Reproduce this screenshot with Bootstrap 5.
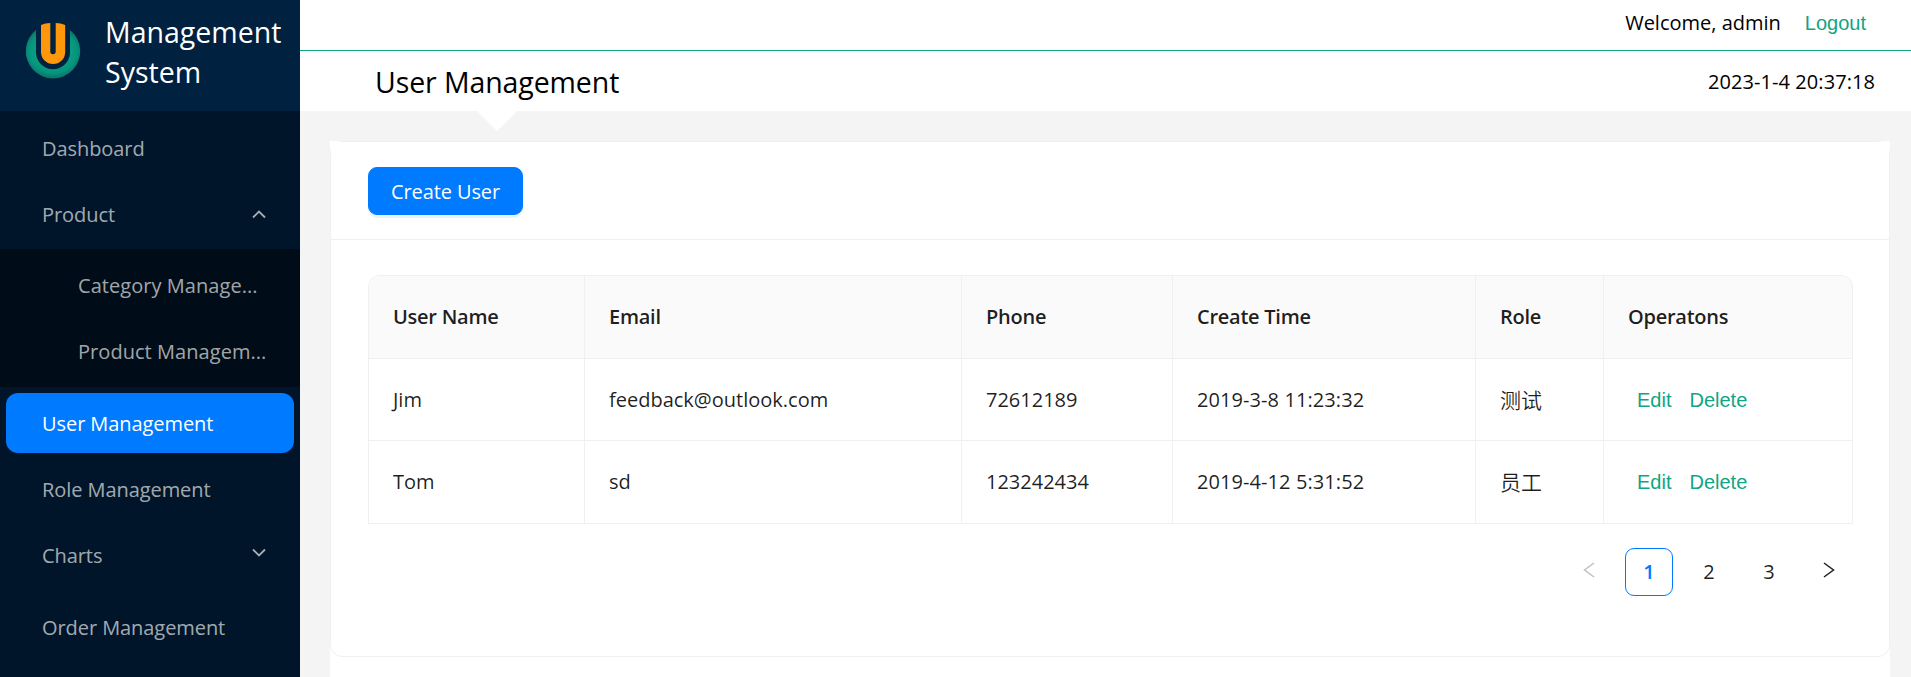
<!DOCTYPE html>
<html lang="en">
<head>
<meta charset="utf-8">
<meta name="viewport" content="width=device-width, initial-scale=1">
<title>Management System</title>
<link href="https://cdn.jsdelivr.net/npm/bootstrap@5.3.0/dist/css/bootstrap.min.css" rel="stylesheet">
<style>
:root { --app-blue: #007aff; --app-green: #10a585; --app-line: #f0f0f0; }
body { font-family: "Open Sans", "Noto Sans CJK SC", sans-serif; font-size: 20px; line-height: 30px; color: #000; height: 677px; background: #f4f4f4; }
.app-side { width: 300px; background: #001529; }
.app-brand { height: 111px; background: #002140; padding: 6px 0 0 26px; gap: 24px; }
.app-brand h1 { font-size: 28.5px; line-height: 40px; font-weight: 400; margin: 6px 0 0; }
.app-logo { margin-top: 16px; }
.app-menu { padding-top: 7px; letter-spacing: -.07px; }
.app-menu .nav-link { height: 60px; margin: 0 6px 6px; padding: 2px 28px 0 36px; border-radius: 12px; color: rgba(255,255,255,.65); }
.app-menu .nav-link.active { background: var(--app-blue); color: #fff; }
.app-sub { background: #000c17; padding: 6px 0; margin: -1px 0 6px; letter-spacing: .05px; }
.app-sub .nav-link { padding-left: 72px; padding-right: 20px; }
.app-sub .nav-link:last-child { margin-bottom: 0; }
.app-menu .after-sub { margin-top: 6px; }
.app-menu .chev-up { margin-top: -2px; }
.app-menu .chev-down { margin-top: -7px; }
.app-top { height: 51px; border-bottom: 1px solid var(--app-green); padding: 0 45px 5px 0; gap: 24px; }
.app-title { height: 60px; padding: 2px 36px 0 75px; letter-spacing: .07px; }
.app-title h2 { font-size: 28.5px; line-height: 40px; font-weight: 400; margin: 0; letter-spacing: -.1px; }
.app-title::after { content: ""; position: absolute; top: 100%; left: 177px; border: 20px solid transparent; border-top-color: #fff; border-bottom: 0; }
.link-btn { font-family: "Liberation Sans", Arial, sans-serif; font-size: 20px; line-height: 30px; color: var(--app-green); background: none; border: 0; padding: 0; }
.app-content { margin: 30px 21px 0 30px; }
.app-card { --bs-card-border-color: var(--app-line); --bs-card-border-radius: 12px; height: 516px; }
.app-card > .card-header { height: 98px; background: #fff; padding: 25px 37px; border-bottom: 1px solid var(--app-line); }
.app-card > .card-body { padding: 35px 36px 0 37px; }
.btn-create { --bs-btn-bg: var(--app-blue); --bs-btn-border-color: var(--app-blue); --bs-btn-color: #fff; width: 155px; height: 48px; border-radius: 9px; font-size: 20px; line-height: 30px; padding: 1px 0 0; letter-spacing: -.1px; box-shadow: 0 3px 0 rgba(5,145,255,.1); }
.app-table { width: 1485px; table-layout: fixed; border-collapse: separate; border-spacing: 0; border-left: 1px solid var(--app-line); border-top: 1px solid var(--app-line); border-radius: 12px 12px 0 0; margin-bottom: 24px; }
.app-table th, .app-table td { height: 83px; padding: 0 24px; vertical-align: middle; border-right: 1px solid var(--app-line); border-bottom: 1px solid var(--app-line); color: rgba(0,0,0,.88); }
.app-table tbody tr:first-child td { height: 82px; }
.app-table th { background: #fafafa; font-weight: 600; letter-spacing: -.25px; }
.app-table th:first-child { border-top-left-radius: 11px; }
.app-table th:last-child { border-top-right-radius: 11px; }
.app-table .role-name { font-size: 21px; font-weight: 350; }
.app-table .stamp { letter-spacing: .08px; }
.app-ops { gap: 18px; padding-left: 9px; }
.app-pages { gap: 12px; }
.app-pages .page-item { margin: 0; }
.app-pages .page-item .page-link { width: 48px; height: 48px; margin: 0; border: 1px solid transparent; border-radius: 9px; font-size: 20px; line-height: 30px; color: rgba(0,0,0,.88); background: none; padding: 0; }
.app-pages .active .page-link { border-color: var(--app-blue); color: var(--app-blue); font-weight: 600; background: #fff; }
.app-pages .disabled .page-link { color: rgba(0,0,0,.25); }
.app-pages svg { margin-top: -4px; }
</style>
</head>
<body class="d-flex overflow-hidden">
<aside class="app-side flex-shrink-0">
  <div class="app-brand d-flex text-white">
    <svg class="app-logo flex-shrink-0" width="55" height="58" viewBox="0 0 55 58">
      <defs><radialGradient id="ring" cx=".5" cy=".45" r=".55"><stop offset=".5" stop-color="#0b9f84"/><stop offset=".8" stop-color="#06957c"/><stop offset="1" stop-color="#0b7069"/></radialGradient></defs>
      <path d="M10 8A27.200 27.200 0 1 0 44 8V30.300A17 17 0 0 1 10 30.300Z" fill="url(#ring)"/>
      <path d="M15 3Q19 1 24.300 1V29.500A2.700 2.700 0 0 0 29.700 29.500V1Q35 1 39.200 3V29.900A12.100 12.100 0 0 1 15 29.900Z" fill="#fe970c"/>
    </svg>
    <h1>Management<br>System</h1>
  </div>
  <nav class="app-menu nav flex-column flex-nowrap">
    <a class="nav-link d-flex align-items-center" href="#">Dashboard</a>
    <a class="nav-link d-flex align-items-center justify-content-between" href="#">Product
      <svg class="chev-up" width="14" height="10" viewBox="0 0 14 10" fill="none" stroke="currentColor" stroke-width="1.800"><path d="M1 8.500 7 2.500 13 8.500"/></svg></a>
    <div class="app-sub">
      <a class="nav-link d-flex align-items-center" href="#">Category Manage...</a>
      <a class="nav-link d-flex align-items-center" href="#">Product Managem...</a>
    </div>
    <a class="nav-link active d-flex align-items-center" href="#">User Management</a>
    <a class="nav-link d-flex align-items-center" href="#">Role Management</a>
    <a class="nav-link d-flex align-items-center justify-content-between" href="#">Charts
      <svg class="chev-down" width="14" height="10" viewBox="0 0 14 10" fill="none" stroke="currentColor" stroke-width="1.800"><path d="M1 1.500 7 7.500 13 1.500"/></svg></a>
    <a class="nav-link after-sub d-flex align-items-center" href="#">Order Management</a>
  </nav>
</aside>
<div class="flex-grow-1 d-flex flex-column">
  <header class="bg-white">
    <div class="app-top d-flex justify-content-end align-items-center">
      <span>Welcome, admin</span><button class="link-btn">Logout</button>
    </div>
    <div class="app-title d-flex justify-content-between align-items-center position-relative">
      <h2>User Management</h2>
      <span>2023-1-4 20:37:18</span>
    </div>
  </header>
  <main class="app-content bg-white flex-grow-1">
    <section class="card app-card">
      <div class="card-header"><button class="btn btn-create">Create User</button></div>
      <div class="card-body">
        <table class="app-table">
          <colgroup><col style="width:216px"><col style="width:377px"><col style="width:211px"><col style="width:303px"><col style="width:128px"><col></colgroup>
          <thead><tr><th>User Name</th><th>Email</th><th>Phone</th><th>Create Time</th><th>Role</th><th>Operatons</th></tr></thead>
          <tbody>
            <tr><td>Jim</td><td>feedback@outlook.com</td><td>72612189</td><td class="stamp">2019-3-8 11:23:32</td><td class="role-name">测试</td><td><div class="app-ops d-flex"><button class="link-btn">Edit</button><button class="link-btn">Delete</button></div></td></tr>
            <tr><td>Tom</td><td>sd</td><td>123242434</td><td class="stamp">2019-4-12 5:31:52</td><td class="role-name">员工</td><td><div class="app-ops d-flex"><button class="link-btn">Edit</button><button class="link-btn">Delete</button></div></td></tr>
          </tbody>
        </table>
        <ul class="pagination app-pages justify-content-end mb-0">
          <li class="page-item disabled"><a class="page-link d-flex align-items-center justify-content-center" href="#"><svg width="12" height="18" viewBox="0 0 12 18" fill="none" stroke="currentColor" stroke-width="1.500"><path d="M11 2 1.500 9 11 16"/></svg></a></li>
          <li class="page-item active"><a class="page-link d-flex align-items-center justify-content-center" href="#">1</a></li>
          <li class="page-item"><a class="page-link d-flex align-items-center justify-content-center" href="#">2</a></li>
          <li class="page-item"><a class="page-link d-flex align-items-center justify-content-center" href="#">3</a></li>
          <li class="page-item"><a class="page-link d-flex align-items-center justify-content-center" href="#"><svg width="12" height="18" viewBox="0 0 12 18" fill="none" stroke="currentColor" stroke-width="1.500"><path d="M1 2 10.500 9 1 16"/></svg></a></li>
        </ul>
      </div>
    </section>
  </main>
</div>
<script src="https://cdn.jsdelivr.net/npm/bootstrap@5.3.0/dist/js/bootstrap.bundle.min.js"></script>
</body>
</html>
